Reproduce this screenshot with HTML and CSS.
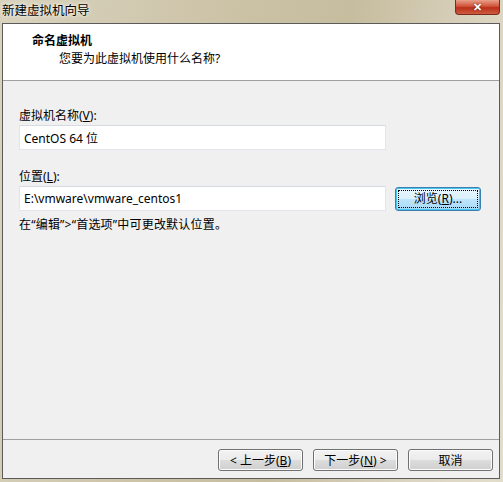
FILE: index.html
```html
<!DOCTYPE html>
<html>
<head>
<meta charset="UTF-8">
<title>新建虚拟机向导</title>
<link rel="stylesheet" href="styles.css">
</head>
<body>
<div class="window">
	<div class="titlebar">
		<span class="title">新建虚拟机向导</span>
		<span class="close">&#x2715;</span>
	</div>
	<div class="client">
		<div class="header">
			<div class="head_title">命名虚拟机</div>
			<div class="head_sub">您要为此虚拟机使用什么名称?</div>
		</div>
		<div class="content">
			<div class="label">虚拟机名称(<u>V</u>):</div>
			<div class="row">
				<input type="text" class="field" value="CentOS 64 位" />
			</div>
			<div class="label second">位置(<u>L</u>):</div>
			<div class="row">
				<input type="text" class="field" value="E:\vmware\vmware_centos1" />
				<button class="btn browse"><span class="focus">浏览(<u>R</u>)...</span></button>
			</div>
			<div class="hint">在“编辑”&gt;“首选项”中可更改默认位置。</div>
		</div>
		<div class="footer">
			<button class="btn">&lt; 上一步(<u>B</u>)</button>
			<button class="btn">下一步(<u>N</u>) &gt;</button>
			<button class="btn cancel">取消</button>
		</div>
	</div>
</div>
</body>
</html>
```
FILE: styles.css
```css
body {
	margin: 0;
	font-family: "Noto Sans", "Noto Sans CJK SC", sans-serif;
	font-size: 12px;
	color: #000;
}
.window {
	width: 503px;
	height: 482px;
	display: flex;
	flex-direction: column;
	background: linear-gradient(100deg, #d9d3be 0%, #cdc4a9 35%, #c6bc9e 60%, #dcd5c2 85%, #e2dccb 100%);
}
.titlebar {
	height: 23px;
	display: flex;
	justify-content: space-between;
	align-items: flex-start;
}
.title {
	padding: 3px 0 0 2px;
	font-size: 12.5px;
	line-height: 16px;
	color: #000;
	text-shadow: 0 0 4px #fff, 0 0 2px #f4f0e6;
}
.close {
	width: 43px;
	height: 14px;
	margin-right: 3px;
	border: 1px solid #7a2b1c;
	border-top: 0;
	border-radius: 0 0 4px 4px;
	background: linear-gradient(#e8a08a 0%, #d2533a 45%, #b8301a 55%, #cf5a3f 100%);
	color: #fff;
	font-size: 11px;
	font-weight: bold;
	line-height: 13px;
	text-align: center;
	text-shadow: 0 0 2px #5a1a0c;
}
.client {
	flex: 1;
	margin: 0 3px 3px 2px;
	border: 1px solid #5b5b5b;
	background-color: #f0f0f0;
	display: flex;
	flex-direction: column;
}
.header {
	height: 57px;
	background-color: #fff;
	border-bottom: 1px solid #a0a0a0;
	padding: 9px 0 0 29px;
	box-sizing: border-box;
	line-height: 16px;
}
.head_title {
	font-weight: bold;
}
.head_sub {
	padding: 2px 0 0 27px;
}
.content {
	flex: 1;
	padding: 27px 0 0 16px;
	border-bottom: 1px solid #a0a0a0;
}
.label {
	line-height: 16px;
	margin-bottom: 1px;
}
.label.second {
	margin-top: 19px;
}
.row {
	display: flex;
	align-items: center;
	gap: 9px;
}
.field {
	width: 367px;
	height: 25px;
	box-sizing: border-box;
	margin: 0;
	padding: 0 4px;
	border: 1px solid #e2e6ec;
	border-top-color: #d6dbe2;
	background-color: #fff;
	font-family: "Noto Sans", "Noto Sans CJK SC", sans-serif;
	font-size: 12px;
	color: #000;
	outline: 0;
}
.hint {
	margin-top: 6px;
	line-height: 16px;
	letter-spacing: 0.2px;
}
.btn {
	width: 85px;
	height: 22px;
	padding: 0;
	box-sizing: border-box;
	border: 1px solid #707070;
	border-radius: 3px;
	background: linear-gradient(#f2f2f2 0%, #ebebeb 50%, #dddddd 51%, #cfcfcf 100%);
	box-shadow: inset 0 0 0 1px #fcfcfc;
	font-family: "Noto Sans", "Noto Sans CJK SC", sans-serif;
	font-size: 12px;
	color: #000;
}
.browse {
	width: 86px;
	height: 24px;
	border-color: #3c7fb1;
	background: linear-gradient(#eaf6fd 0%, #d9f0fc 50%, #bee6fd 51%, #a7d9f5 100%);
	box-shadow: inset 0 0 0 1px #48c4f0;
	display: flex;
	padding: 2px;
}
.focus {
	flex: 1;
	border: 1px dotted #000;
	line-height: 16px;
}
.footer {
	height: 38px;
	display: flex;
	align-items: center;
	justify-content: flex-end;
	gap: 10px;
	padding-right: 6px;
	padding-top: 1px;
	box-sizing: border-box;
}
```
